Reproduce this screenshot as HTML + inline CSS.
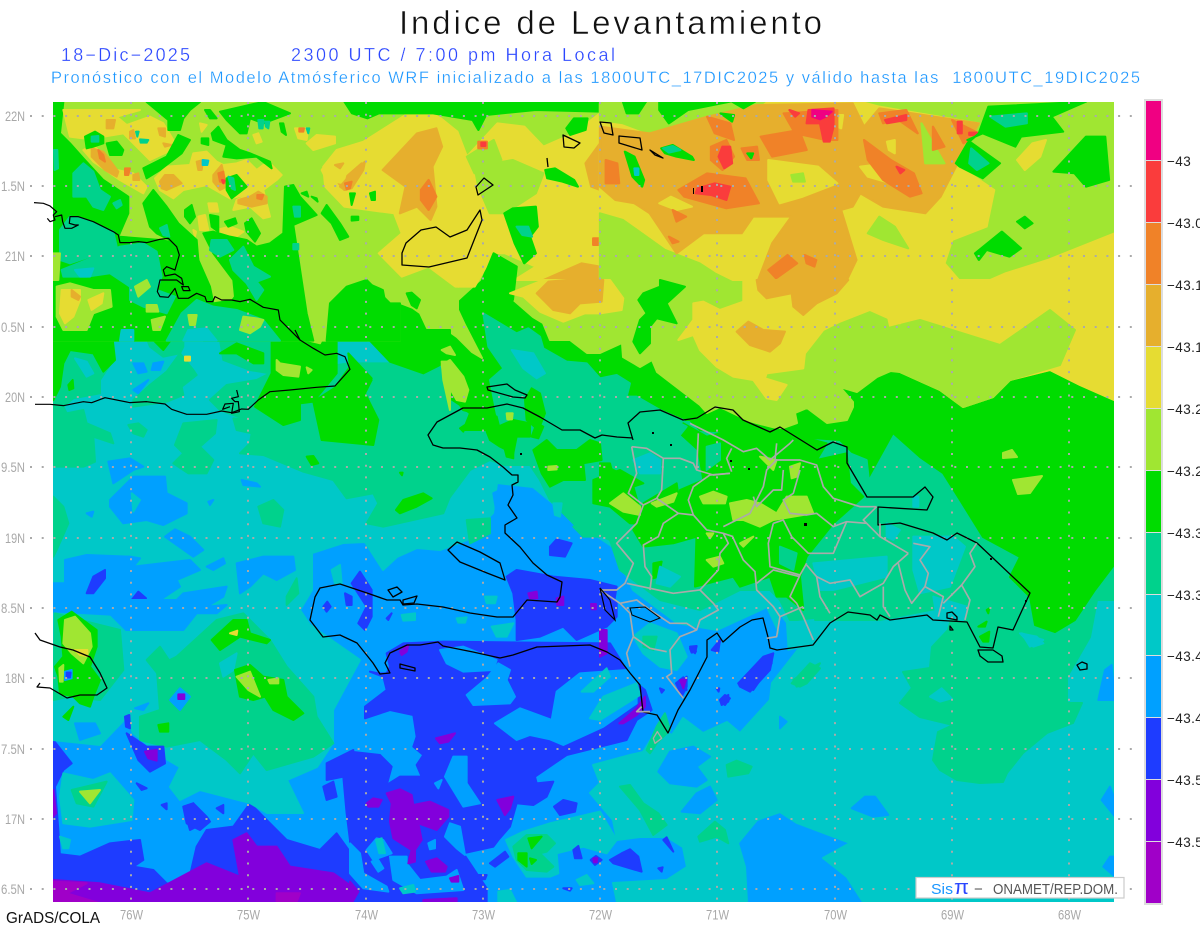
<!DOCTYPE html>
<html><head><meta charset="utf-8"><title>Indice de Levantamiento</title>
<style>
html,body{margin:0;padding:0;background:#fff;width:1200px;height:927px;overflow:hidden}
svg{display:block;position:absolute;left:0;top:0}
text{font-family:"Liberation Sans",sans-serif}
polygon{stroke-linejoin:round}
.m{fill:#f00082;stroke:#f00082}.r{fill:#fa3c3c;stroke:#fa3c3c}.o{fill:#f08228;stroke:#f08228}
.d{fill:#e6af2d;stroke:#e6af2d}.y{fill:#e6dc32;stroke:#e6dc32}.g{fill:#a0e632;stroke:#a0e632}
.n{fill:#00dc00;stroke:#00dc00}.s{fill:#00d28c;stroke:#00d28c}.c{fill:#00c8c8;stroke:#00c8c8}
.b{fill:#00a0ff;stroke:#00a0ff}.u{fill:#1e3cff;stroke:#1e3cff}.i{fill:#8200dc;stroke:#8200dc}
.p{fill:#a000c8;stroke:#a000c8}
.px polygon{stroke-width:2}.z3 polygon{stroke-width:6}.z1 polygon{stroke-width:6}
.coast1{fill:none;stroke:#000;stroke-width:1.3;stroke-linejoin:round}
.coast3{fill:none;stroke:#000;stroke-width:3.6;stroke-linejoin:round}
.prov{fill:none;stroke:#aaa;stroke-width:5;stroke-linejoin:round}
.ax{font-size:13.5px;fill:#a8a8a8}
.bar{font-size:13.5px;fill:#222;letter-spacing:.4px}
.thin{stroke:#fff;stroke-width:.3px}
</style></head><body>
<svg width="1200" height="927" viewBox="0 0 1200 927" xmlns="http://www.w3.org/2000/svg">
<defs><clipPath id="mp"><rect x="53" y="102" width="1061" height="800"/></clipPath></defs>
<rect width="1200" height="927" fill="#fff"/>
<text x="399" y="34" font-size="33" fill="#111" textLength="423" lengthAdjust="spacing" stroke="#fff" stroke-width=".5">Indice de Levantamiento</text>
<text class="thin" x="61" y="61" font-size="18" fill="#2a46ff" textLength="129" lengthAdjust="spacing">18−Dic−2025</text>
<text class="thin" x="291" y="61" font-size="18" fill="#2a46ff" textLength="324" lengthAdjust="spacing">2300 UTC / 7:00 pm Hora Local</text>
<text class="thin" x="51" y="83" font-size="16.5" fill="#1a96ff" textLength="1089" lengthAdjust="spacing" xml:space="preserve">Pronóstico con el Modelo Atmósferico WRF inicializado a las 1800UTC_17DIC2025 y válido hasta las  1800UTC_19DIC2025</text>

<g clip-path="url(#mp)">
<rect x="53" y="102" width="1061" height="800" fill="#00a0ff"/>

<!-- low layers, lower-left -->
<g class="z3" transform="translate(0,600) scale(.3333)">
<polygon class="u" points="160,760 240,770 330,730 420,720 430,780 400,800 460,810 500,850 560,870 590,740 620,690 700,680 750,610 800,660 860,720 960,750 1010,700 1060,770 1060,910 160,910"/>
<polygon class="u" points="160,420 215,490 190,510 165,560 175,690 180,770 155,770"/>
<polygon class="u" points="980,490 1060,450 1060,800 1040,640 1030,530 980,540"/>
<polygon class="u" points="620,650 630,665 600,690 560,670 550,620 580,610"/>
<polygon class="u" points="970,560 1000,545 1010,590 980,600"/>
<polygon class="i" points="160,840 300,850 450,880 620,790 720,830 700,720 740,700 770,740 830,740 870,800 1000,820 1070,870 1070,910 160,910"/>
<polygon class="i" points="160,570 168,640 160,650"/>
<polygon class="p" points="160,845 260,850 200,880 300,910 160,910"/>
<polygon class="p" points="830,880 900,880 890,905 830,905"/>
</g>
<!-- low layers, centre -->
<g class="z3" transform="translate(350,640) scale(.3333)">
<polygon class="u" points="45,200 110,150 100,110 60,95 85,100 110,100 120,80 110,40 160,10 280,5 780,10 830,90 860,130 885,150 905,210 860,240 830,300 650,345 555,410 560,430 610,425 590,470 550,495 500,490 480,560 445,600 430,620 340,640 410,745 410,790 0,790 0,335 90,345 125,380 110,435 150,410 215,410 200,375 220,345 190,320 200,290 190,225 120,210 45,235"/>
<polygon class="b" points="270,30 340,20 440,60 430,90 340,95 290,70"/>
<polygon class="b" points="350,165 410,115 445,70 480,90 470,120 495,170 480,190 370,195"/>
<polygon class="b" points="435,250 510,205 605,240 620,155 690,100 830,90 860,130 860,190 760,260 640,315 600,298 540,285 500,300"/>
<polygon class="b" points="285,410 310,350 350,350 350,430 390,490 340,500"/>
<polygon class="b" points="255,430 275,420 265,445"/>
<polygon class="b" points="285,590 300,550 330,560 345,645 320,625"/>
<polygon class="b" points="235,610 255,600 255,625 240,628"/>
<polygon class="b" points="0,610 30,640 40,700 110,740 115,755 40,745 0,700"/>
<polygon class="b" points="120,650 170,650 170,670 210,720 290,710 320,690 340,750 200,760 130,720"/>
<polygon class="b" points="65,665 85,660 100,685 85,695"/>
<polygon class="b" points="80,595 100,600 125,640 70,660 50,630"/>
<polygon class="c" points="78,600 95,595 105,640 88,640"/>
<polygon class="c" points="150,745 190,735 195,755 160,760"/>
<polygon class="i" points="110,460 150,448 185,465 190,495 240,485 295,510 295,530 260,570 205,550 215,600 195,630 195,665 175,670 185,630 130,595 120,545 125,490"/>
<polygon class="i" points="50,490 70,475 95,480 85,500 55,500"/>
<polygon class="i" points="258,295 315,280 295,305 270,310"/>
<polygon class="i" points="442,480 490,470 480,505 465,525"/>
<polygon class="i" points="228,665 260,655 290,680 285,695 245,695"/>
<polygon class="i" points="300,715 325,708 325,725 305,725"/>
<polygon class="i" points="150,35 175,15 170,35 155,45"/>
<polygon class="i" points="808,250 860,205 885,170 885,200 860,225 820,250"/>
<polygon class="i" points="220,780 320,775 320,790 220,790"/>
<polygon class="i" points="0,725 25,755 5,790 0,790"/>
</g>
<g class="z3" transform="translate(300,380) scale(.3333)">
<polygon class="u" points="620,590 650,570 760,590 870,600 950,620 940,680 920,740 830,780 790,740 720,770 650,780 650,720 640,640"/>
<polygon class="u" points="750,500 770,478 815,490 795,530 750,525"/>
<polygon class="i" points="685,640 710,635 712,655 690,655"/>
<polygon class="i" points="770,655 790,650 790,675 772,675"/>
<polygon class="i" points="873,672 888,672 888,688 875,688"/>
</g>
<g class="z3" transform="translate(600,390) scale(.3333)">
<polygon class="u" points="0,590 50,640 50,680 20,710 0,700"/>
<polygon class="i" points="0,720 20,720 20,790 0,800"/>
</g>

<!-- big contour layers -->
<g class="px">
<polygon class="c" points="53,102 1114,102 1114,902 863,902 847,877 823,858 850,843 797,823 780,812 777,813 757,820 738,843 745,867 747,902 617,902 613,883 667,880 687,867 683,847 667,837 640,837 617,840 613,820 590,793 600,783 593,765 630,755 643,752 658,728 672,735 683,718 703,733 727,722 740,733 770,700 772,683 800,647 787,650 767,607 717,630 677,623 633,590 613,547 573,520 533,487 497,483 493,513 467,540 440,550 417,548 397,557 383,570 365,542 343,543 312,553 312,590 300,610 310,625 360,660 333,710 333,743 317,767 287,780 303,813 267,813 250,803 200,790 180,800 170,787 180,767 163,757 133,733 127,717 100,745 53,740"/>
<polygon class="s" points="450,102 1114,102 1114,600 1097,600 1090,637 1067,677 1067,703 1082,703 1073,723 1047,733 1023,753 1007,773 1003,782 980,783 957,780 940,770 933,760 938,732 953,725 920,717 900,703 912,688 903,672 930,668 932,647 948,630 950,623 960,605 930,610 880,620 790,620 780,600 770,590 740,590 700,610 660,600 640,585 620,570 610,540 575,525 550,500 540,480 530,465 505,465 490,460 470,470 450,497"/>
<polygon class="n" points="53,102 1114,102 1114,565 1095,590 1075,620 1055,632 1035,625 1030,597 1010,577 1020,557 983,537 960,500 943,473 920,457 893,433 867,480 853,453 840,440 700,430 690,420 500,420 463,410 460,405 442,393 430,367 423,373 400,362 380,330 53,330"/>
<polygon class="g" points="400,102 1114,102 1114,400 1080,385 1050,370 1010,380 993,397 963,407 940,390 900,372 893,370 877,377 857,392 840,387 853,402 853,407 847,420 827,423 807,408 795,413 797,423 783,428 767,427 747,420 720,407 707,413 700,405 657,372 652,360 640,367 623,357 622,343 600,353 587,353 570,340 550,340 543,323 533,317 510,297 505,280 490,255 480,280 458,300 458,310 465,325 482,358 472,352 457,337 450,332 427,328 420,313 413,308 400,303"/>
<polygon class="y" points="880,280 1114,280 1114,400 1080,385 1050,370 1010,380 993,397 963,407 940,390 900,372"/>
<polygon class="g" points="880,330 920,320 1000,345 1050,310 1075,330 1060,365 1010,380 993,397 963,407 940,390 900,372 880,370"/>
<polygon class="g" points="1003,453 1012,450 1017,457 1003,458"/>
<polygon class="g" points="1013,480 1042,476 1030,493 1018,494"/>
</g>

<!-- west, 20N-17.6N -->
<g class="z3" transform="translate(50,330) scale(.3333)">
<polygon class="s" points="10,60 185,60 190,90 150,150 150,190 70,205 40,230 50,250 100,240 110,280 180,310 190,340 130,320 135,395 100,410 10,410"/>
<polygon class="s" points="10,500 40,530 55,580 20,660 10,680"/>
<polygon class="s" points="250,210 300,165 350,125 390,70 430,120 440,135 395,170 400,195 350,215 250,230"/>
<polygon class="s" points="280,0 400,0 400,50 390,70 340,80 300,50"/>
<polygon class="s" points="400,280 500,270 495,310 450,350 490,390 470,430 415,430 370,400 400,370 375,345"/>
<polygon class="s" points="235,285 265,280 290,300 280,320 250,310"/>
<polygon class="s" points="480,210 530,165 620,150 660,130 900,100 1200,100 1200,500 1180,550 1000,590 950,580 985,520 970,490 890,505 850,450 760,425 640,375 570,370 600,340 605,310 560,300 550,265 590,270 510,240"/>
<polygon class="s" points="625,530 670,510 700,540 690,590 640,580"/>
<polygon class="s" points="510,30 580,0 660,0 660,130 600,120 520,90"/>
<polygon class="n" points="10,0 185,0 195,90 160,125 130,70 60,60 40,100 30,170 10,210"/>
<polygon class="n" points="55,165 68,150 70,175 58,180"/>
<polygon class="n" points="300,0 385,0 340,60 310,30"/>
<polygon class="g" points="320,0 360,0 335,25"/>
<polygon class="y" points="405,80 420,80 420,92 405,92"/>
<polygon class="n" points="510,70 560,40 640,70 640,100 610,100 560,70"/>
<polygon class="n" points="665,0 860,0 860,130 790,215 750,220 750,270 700,285 615,230 665,130"/>
<polygon class="n" points="790,215 860,170 895,145 965,150 945,190 985,270 970,345 815,330"/>
<polygon class="n" points="895,70 965,145 895,145 860,165 900,110"/>
<polygon class="n" points="930,0 1200,0 1200,90 1120,130 1020,95"/>
<polygon class="n" points="1038,540 1060,510 1120,490 1145,505 1100,530 1050,550"/>
<polygon class="n" points="770,380 790,378 805,400 785,405"/>
<polygon class="n" points="1050,428 1058,428 1056,436"/>
<polygon class="g" points="680,90 690,100 750,110 745,140 700,135 680,120"/>
<polygon class="g" points="770,112 785,120 775,130"/>
<polygon class="g" points="750,0 830,0 810,40 770,30"/>
<polygon class="g" points="1175,95 1200,95 1200,240 1180,150"/>
<polygon class="c" points="75,85 110,95 130,130 110,140"/>
<polygon class="b" points="250,100 280,100 290,125 265,130"/>
<polygon class="b" points="310,100 340,95 330,120 305,120"/>
<polygon class="b" points="250,180 295,150 265,190"/>
<polygon class="b" points="175,395 240,385 280,410 250,420 190,460"/>
<polygon class="b" points="180,510 250,440 345,440 350,490 410,520 410,550 340,585 290,570 220,580 180,530"/>
<polygon class="c" points="245,490 270,510 250,545"/>
<polygon class="b" points="345,620 375,598 420,620 460,660 430,680"/>
<polygon class="b" points="110,550 130,545 125,560"/>
<polygon class="b" points="575,450 620,460 630,470 580,465"/>
<polygon class="b" points="475,515 490,510 480,525"/>
<polygon class="b" points="470,710 520,685 525,700 490,720"/>
<polygon class="b" points="560,700 640,680 730,680 735,720 680,750 640,730 600,770 570,790"/>
<polygon class="b" points="45,690 110,675 240,680 270,685 250,710 420,690 450,720 380,750 390,770 300,830 250,870 320,870 400,790 530,770 520,800 470,830 530,825 500,850 440,850 400,900 10,900 10,760 45,760"/>
<polygon class="u" points="110,790 130,740 165,720 165,745 130,790"/>
<polygon class="u" points="245,810 265,785 288,805 280,825 250,825"/>
<polygon class="c" points="845,720 870,705 875,760 855,760"/>
<polygon class="s" points="710,800 740,745 745,790 710,825"/>
<polygon class="u" points="905,760 930,725 965,780 965,860 945,900 925,880 950,830"/>
<polygon class="u" points="885,790 905,800 905,825 890,825"/>
<polygon class="u" points="820,830 832,815 842,830 830,845"/>
<polygon class="u" points="1010,865 1025,850 1015,870"/>
</g>

<!-- north-west -->
<g class="z3" transform="translate(50,100) scale(.3333)">
<polygon class="g" points="8,6 1050,6 1050,722 8,722"/>
<polygon class="n" points="8,6 40,6 30,100 60,130 100,175 160,240 235,290 235,340 205,410 330,420 440,440 445,480 480,560 490,610 555,600 560,722 8,722"/>
<polygon class="y" points="40,30 270,30 200,50 230,75 300,50 340,70 370,120 365,150 300,180 260,140 220,100 160,110 100,115 60,110"/>
<polygon class="y" points="100,150 130,135 200,210 250,220 290,260 280,280 210,240 130,185"/>
<polygon class="y" points="315,235 350,200 420,195 430,160 470,155 500,185 520,195 560,190 590,180 620,210 640,195 665,195 695,225 680,240 640,270 660,350 640,355 600,320 550,330 560,300 610,280 540,295 470,255 400,270 370,295 330,270"/>
<polygon class="y" points="445,350 465,345 475,390 450,390"/>
<polygon class="y" points="500,390 540,380 580,395 545,420 510,405"/>
<polygon class="y" points="475,310 500,310 505,335 480,335"/>
<polygon class="y" points="770,130 800,105 855,110 855,130 790,150"/>
<polygon class="y" points="735,85 775,85 770,120 745,115"/>
<polygon class="y" points="610,105 625,100 635,125 620,130"/>
<polygon class="y" points="450,70 470,75 455,95"/>
<polygon class="y" points="430,390 438,395 435,410"/>
<polygon class="d" points="170,60 195,60 190,85 170,85"/>
<polygon class="d" points="125,145 160,155 205,215 200,230 165,210 125,170"/>
<polygon class="o" points="145,150 160,165 165,185 150,175"/>
<polygon class="d" points="240,95 250,90 255,115 240,115"/>
<polygon class="d" points="325,85 345,85 345,110 330,105"/>
<polygon class="d" points="340,130 365,135 345,140"/>
<polygon class="o" points="225,205 240,205 235,225 225,225"/>
<polygon class="d" points="250,225 265,220 268,240 250,240"/>
<polygon class="d" points="330,245 345,225 370,225 395,250 350,270 335,265"/>
<polygon class="d" points="490,225 515,195 530,260 510,270 490,245"/>
<polygon class="o" points="505,220 520,215 525,250 510,245"/>
<polygon class="r" points="516,240 525,242 520,250"/>
<polygon class="d" points="565,300 600,290 625,275 650,290 650,310 605,320 565,310"/>
<polygon class="o" points="622,285 640,285 635,298 622,295"/>
<polygon class="d" points="440,185 460,180 455,210 445,210"/>
<polygon class="o" points="748,85 762,85 760,95 748,95"/>
<polygon class="n" points="280,310 310,270 350,320 385,370 440,420 445,480 400,440 320,400 300,380"/>
<polygon class="n" points="460,400 490,395 540,410 590,420 620,440 660,430 700,400 705,260 730,255 750,290 800,345 730,375 770,640 790,722 460,722 555,590 550,540 490,460"/>
<polygon class="n" points="290,6 450,6 420,30 400,55 390,90 355,90 355,60"/>
<polygon class="n" points="510,35 620,10 640,6 720,40 680,55 640,70 600,55 590,100 570,100 530,60"/>
<polygon class="n" points="465,30 480,30 500,55 480,55"/>
<polygon class="n" points="690,70 700,70 708,105 695,95"/>
<polygon class="n" points="455,115 475,115 475,135 455,130"/>
<polygon class="n" points="485,100 505,80 530,120 570,150 600,160 660,185 665,205 620,170 560,175 520,170 530,135 490,120"/>
<polygon class="n" points="280,205 350,170 385,105 420,120 395,160 330,210 290,235"/>
<polygon class="n" points="170,130 200,125 220,150 215,165 180,165"/>
<polygon class="n" points="105,110 135,95 160,110 160,130 130,140 110,145"/>
<polygon class="n" points="530,235 560,225 590,260 545,295 530,270"/>
<polygon class="n" points="405,330 425,315 435,350 420,370 405,350"/>
<polygon class="n" points="480,345 505,350 505,395 485,380"/>
<polygon class="n" points="525,365 555,355 560,370 535,380"/>
<polygon class="n" points="585,370 605,355 630,400 615,425 590,395"/>
<polygon class="n" points="815,340 830,315 870,370 895,410 870,420 845,370"/>
<polygon class="n" points="755,280 770,275 775,290"/>
<polygon class="n" points="785,290 800,295 803,305"/>
<polygon class="s" points="30,390 60,350 110,360 190,395 200,440 150,460 60,490 30,480"/>
<polygon class="s" points="210,440 280,430 320,455 335,530 320,570 375,590 350,640 280,620 240,600 240,560 180,520 110,530 40,530 35,510 110,480"/>
<polygon class="s" points="350,722 395,640 440,600 490,620 560,630 640,660 690,722"/>
<polygon class="s" points="70,220 100,190 130,215 150,270 180,290 160,330 130,320 110,290 70,290"/>
<polygon class="s" points="190,310 210,300 215,315 200,325"/>
<polygon class="s" points="330,385 350,375 358,410 340,405"/>
<polygon class="s" points="485,420 530,420 550,450 510,470 480,450"/>
<polygon class="s" points="540,480 580,440 610,500 660,530 620,545 640,570 620,600 590,550 550,510"/>
<polygon class="s" points="730,320 750,320 750,350 735,350"/>
<polygon class="s" points="730,432 745,432 745,448 730,448"/>
<polygon class="s" points="860,690 900,680 940,700 950,722 860,722"/>
<polygon class="s" points="125,110 145,108 145,125 125,125"/>
<polygon class="s" points="258,95 266,95 262,110"/>
<polygon class="s" points="270,118 295,120 290,128 272,128"/>
<polygon class="s" points="625,60 640,60 638,85 628,85"/>
<polygon class="s" points="645,65 658,65 655,85 648,80"/>
<polygon class="s" points="535,230 550,235 555,270 545,265"/>
<polygon class="s" points="770,85 778,85 775,100"/>
<polygon class="s" points="12,150 22,150 24,205 14,210"/>
<polygon class="c" points="458,180 475,182 472,195 458,195"/>
<polygon class="c" points="415,690 470,685 500,722 400,722"/>
<polygon class="c" points="75,510 130,505 120,530 90,530"/>
<polygon class="c" points="215,690 250,690 250,722 210,722"/>
<polygon class="g" points="20,560 60,550 130,570 180,570 185,620 130,640 110,690 40,690 20,650"/>
<polygon class="y" points="35,570 90,570 90,600 70,650 45,670 30,640"/>
<polygon class="y" points="115,600 160,580 155,610 125,630"/>
<polygon class="d" points="65,570 90,590 85,600 65,590"/>
<polygon class="g" points="255,560 290,540 300,560 265,590"/>
<polygon class="g" points="290,615 320,615 325,635 290,635"/>
<polygon class="g" points="305,660 345,650 330,690 310,690"/>
<polygon class="g" points="415,645 440,645 435,675 420,675"/>
<polygon class="g" points="580,650 620,655 640,660 630,680 600,700 570,690"/>
<polygon class="g" points="10,460 30,460 25,540 10,540"/>
</g>

<!-- top-centre details -->
<g class="z1" transform="scale(.3827,.3333)">
<polygon class="y" points="845,500 880,450 950,425 1060,345 1130,335 1195,395 1220,470 1300,370 1370,380 1420,440 1500,400 1568,340 1568,840 1345,840 1400,800 1320,760 1290,760 1240,860 1190,860 1120,800 1050,830 990,760 1050,700 1030,640 900,620 850,560"/>
<polygon class="g" points="1240,500 1340,480 1420,520 1400,580 1320,640 1280,640 1250,560"/>
<polygon class="g" points="1220,470 1290,420 1310,480 1240,520"/>
<polygon class="d" points="1000,510 1090,400 1140,385 1155,440 1130,500 1140,620 1125,660 1090,620 1045,640 1060,560"/>
<polygon class="d" points="885,550 945,490 920,560 900,570"/>
<polygon class="d" points="1530,490 1568,430 1568,570 1545,560"/>
<polygon class="d" points="1420,840 1520,790 1568,800 1568,840"/>
<polygon class="o" points="1100,570 1120,540 1140,590 1120,630 1100,600"/>
<polygon class="o" points="1250,425 1272,425 1272,445 1250,445"/>
<polygon class="o" points="1550,715 1568,715 1568,735 1550,735"/>
<polygon class="r" points="1258,428 1268,428 1268,438 1258,438"/>
<polygon class="n" points="900,305 1568,305 1568,335 1400,330 1270,345 1250,390 1235,360 1130,340 990,340 960,355 920,340"/>
<polygon class="n" points="1318,640 1340,625 1400,620 1405,680 1385,710 1400,760 1370,790 1345,730"/>
<polygon class="n" points="1425,510 1450,505 1500,540 1510,560 1470,545 1430,535"/>
<polygon class="n" points="1480,385 1500,355 1535,355 1530,390 1490,405"/>
<polygon class="n" points="900,900 910,860 950,845 1000,870 1005,900"/>
<polygon class="n" points="1290,760 1350,800 1340,900 1240,900"/>
<polygon class="s" points="1350,680 1380,680 1390,710 1365,705"/>
</g>
<g class="z3" transform="translate(50,100) scale(.3333)">
<polygon class="n" points="830,722 840,610 890,560 950,540 1020,610 1050,610 1050,722"/>
<polygon class="n" points="900,280 915,280 905,315"/>
<polygon class="n" points="960,280 975,275 975,300 965,300"/>
<polygon class="n" points="905,350 925,350 925,360 905,362"/>
<polygon class="y" points="815,210 845,170 900,170 880,250 830,240"/>
<polygon class="d" points="855,195 880,190 870,205"/>
<polygon class="d" points="870,260 900,225 945,185 940,210 905,265 885,270"/>
<polygon class="o" points="885,250 905,245 900,265 890,268"/>
</g>

<!-- top-right details -->
<g class="z1" transform="translate(600,0) scale(.3827,.3333)">
<polygon class="y" points="0,310 680,305 730,320 990,370 940,440 940,500 1030,570 1010,680 920,720 900,790 960,870 1060,820 1170,780 1345,700 1345,840 0,840"/>
<polygon class="g" points="0,640 60,660 170,750 260,790 300,820 370,860 330,900 0,900"/>
<polygon class="g" points="700,700 730,650 770,680 805,745 740,720"/>
<polygon class="g" points="0,305 430,305 400,330 300,350 200,380 130,400 60,370 0,360"/>
<polygon class="d" points="0,380 130,400 280,350 410,315 660,310 690,380 730,325 990,370 960,430 930,500 890,590 850,640 740,620 680,580 660,620 630,630 670,780 620,900 420,900 410,850 450,730 500,650 400,650 370,700 270,700 200,760 130,640 90,610 40,600 0,560"/>
<polygon class="g" points="840,370 900,490 850,490"/>
<polygon class="y" points="155,610 185,590 240,620 200,630"/>
<polygon class="y" points="440,480 570,500 620,550 530,590 470,610 440,540"/>
<polygon class="y" points="680,500 750,490 790,560 700,530"/>
<polygon class="y" points="500,410 530,440 480,460"/>
<polygon class="y" points="620,345 635,345 630,385 620,380"/>
<polygon class="y" points="750,425 770,420 770,460 755,450"/>
<polygon class="g" points="500,525 530,520 535,545 505,545"/>
<polygon class="o" points="690,420 760,480 820,520 840,580 810,590 740,540 700,480"/>
<polygon class="o" points="205,570 280,520 380,535 415,610 330,625 220,590"/>
<polygon class="o" points="290,440 330,420 350,470 320,510 290,480"/>
<polygon class="o" points="280,350 340,370 350,420 300,400"/>
<polygon class="o" points="420,410 520,390 540,450 450,470"/>
<polygon class="o" points="480,340 620,330 620,420 590,420 510,400"/>
<polygon class="o" points="730,340 800,330 830,400 780,360 740,370"/>
<polygon class="o" points="870,380 900,440 870,450"/>
<polygon class="o" points="920,360 990,400 950,430"/>
<polygon class="o" points="440,810 490,765 515,790 460,835"/>
<polygon class="o" points="535,765 565,780 560,800 540,790"/>
<polygon class="o" points="190,630 225,650 200,665"/>
<polygon class="o" points="180,710 205,725 190,730"/>
<polygon class="o" points="15,480 45,490 50,550 15,550"/>
<polygon class="o" points="370,445 410,440 415,480 385,480"/>
<polygon class="r" points="320,440 340,440 345,490 325,505 310,470"/>
<polygon class="r" points="255,565 300,550 340,560 330,600 290,585 250,580"/>
<polygon class="r" points="545,330 610,325 610,380 600,425 585,425 575,370 540,370"/>
<polygon class="r" points="745,360 800,345 800,360 750,370"/>
<polygon class="r" points="775,500 795,510 785,520"/>
<polygon class="r" points="965,398 985,398 985,405 965,405"/>
<polygon class="r" points="495,330 520,340 510,350"/>
<polygon class="r" points="935,365 945,365 945,400 935,400"/>
<polygon class="m" points="555,330 605,335 590,350 575,358 555,350"/>
<polygon class="n" points="60,305 120,305 100,340 70,340"/>
<polygon class="n" points="155,305 340,305 230,330 180,370 155,330"/>
<polygon class="n" points="315,340 350,345 345,365"/>
<polygon class="n" points="345,305 405,305 375,325"/>
<polygon class="n" points="160,445 190,435 240,470 245,480 200,470 170,460"/>
<polygon class="n" points="65,455 90,470 115,540 110,560 85,530"/>
<polygon class="n" points="1015,320 1270,305 1180,350 1210,395 1100,410 1085,440 1000,400 960,420 1045,490 1000,535 940,500 930,490 960,430 990,400"/>
<polygon class="n" points="1185,515 1270,410 1320,410 1330,540 1270,560 1240,520"/>
<polygon class="n" points="1090,665 1110,650 1130,670 1110,685"/>
<polygon class="n" points="980,760 1050,695 1100,745 1070,770 1010,750 990,780"/>
<polygon class="n" points="385,460 400,460 395,475"/>
<polygon class="s" points="970,445 1015,490 985,510 965,490"/>
<polygon class="s" points="1020,350 1115,340 1115,370 1060,380"/>
<polygon class="s" points="165,445 190,438 210,450 180,458"/>
<polygon class="c" points="90,505 100,505 100,525 92,525"/>
<polygon class="y" points="1090,480 1130,430 1165,420 1150,470 1110,510"/>
<polygon class="y" points="1305,770 1320,770 1315,810 1305,805"/>
</g>

<!-- y 280-430 centre -->
<g class="z3" transform="translate(400,280) scale(.3333)">
<polygon class="y" points="150,0 190,0 175,20"/>
<polygon class="n" points="20,40 35,38 60,60 50,85 35,75"/>
<polygon class="y" points="330,40 430,0 630,0 670,55 665,90 600,100 555,100 490,125 420,95 370,50"/>
<polygon class="d" points="410,40 445,5 500,0 610,0 605,65 540,70 510,100 460,90"/>
<polygon class="y" points="880,70 910,65 960,90 1030,65 1030,0 1500,0 1500,130 1410,90 1320,125 1270,150 1215,220 1210,265 1100,280 1095,295 1160,315 1130,360 1100,355 1060,300 1000,290 950,260 900,210 880,165 835,180 880,120"/>
<polygon class="d" points="1070,0 1345,0 1310,40 1250,70 1210,105 1180,80 1175,40 1100,55 1075,30"/>
<polygon class="d" points="1010,155 1045,125 1090,150 1155,155 1140,190 1110,215 1050,195"/>
<polygon class="y" points="0,0 0,0"/>
<polygon class="g" points="890,270 905,265 905,285 895,285"/>
<polygon class="n" points="780,0 855,20 800,70 830,130 770,115 750,140 750,190 720,220 700,185 720,120 740,100 715,60 730,40 780,20"/>
<polygon class="s" points="250,100 300,130 350,160 385,145 420,170 430,205 500,245 560,250 600,295 650,285 690,310 680,350 710,350 780,390 850,420 870,450 305,450 290,400 270,300 310,265 265,200"/>
<polygon class="c" points="335,210 400,220 435,280 410,295 370,265"/>
<polygon class="g" points="125,255 150,240 190,290 205,330 195,365 170,360 135,300"/>
<polygon class="g" points="125,210 150,200 165,225 140,220"/>
<polygon class="n" points="375,360 395,325 420,340 435,400 415,450 380,420"/>
<polygon class="n" points="180,375 210,400 190,450 300,450 290,410 250,400"/>
<polygon class="g" points="322,400 338,400 335,418 325,418"/>
</g>

<!-- lower-left details -->
<g class="z3" transform="translate(0,600) scale(.3333)">
<polygon class="b" points="370,0 600,0 470,60 400,90"/>
<polygon class="c" points="160,40 330,50 380,100 370,200 330,300 230,330 160,330"/>
<polygon class="s" points="165,40 280,70 360,90 370,210 300,300 210,290 160,300"/>
<polygon class="n" points="175,60 215,35 290,90 290,140 270,200 300,240 280,290 270,320 240,310 220,290 180,280 175,230 165,200 190,170 185,110"/>
<polygon class="g" points="195,60 225,50 270,100 275,140 250,190 215,160 190,130"/>
<polygon class="y" points="225,150 262,150 262,168 240,165"/>
<polygon class="g" points="178,205 190,195 188,245 180,245"/>
<polygon class="b" points="195,215 215,210 215,235 195,240"/>
<polygon class="u" points="200,218 212,218 210,232 200,232"/>
<polygon class="n" points="190,350 220,320 205,360"/>
<polygon class="c" points="190,520 280,540 330,520 400,600 395,660 270,680 190,670 180,590"/>
<polygon class="s" points="215,570 320,545 280,620 230,610"/>
<polygon class="g" points="240,575 300,570 270,610"/>
<polygon class="c" points="180,710 210,720 205,745 190,745"/>
<polygon class="b" points="225,370 285,370 300,400 240,420"/>
<polygon class="s" points="530,170 650,60 730,40 810,120 860,200 940,290 950,350 1000,430 940,470 800,510 760,460 720,520 680,480 600,420 500,440 420,420 420,350 480,330 470,200"/>
<polygon class="s" points="440,180 480,140 520,200 480,230"/>
<polygon class="c" points="660,190 710,160 700,210 670,230"/>
<polygon class="n" points="635,120 700,60 740,60 750,100 810,120 800,130 720,110 660,150"/>
<polygon class="n" points="705,210 750,195 790,230 850,240 860,290 910,340 880,360 820,330 795,290 760,300 720,290"/>
<polygon class="g" points="710,230 750,215 780,290 745,270"/>
<polygon class="y" points="690,100 712,92 710,105"/>
<polygon class="g" points="805,240 835,235 835,250 810,250"/>
<polygon class="n" points="475,375 505,370 505,395 480,395"/>
<polygon class="b" points="510,300 540,265 570,290 540,330"/>
<polygon class="i" points="535,283 553,283 553,297 535,297"/>
<polygon class="b" points="405,325 445,310 430,330"/>
<polygon class="u" points="380,400 440,440 490,440 495,490 450,515 415,480"/>
<polygon class="i" points="435,455 470,450 470,482 445,475"/>
<polygon class="u" points="375,350 388,345 390,385 378,380"/>
<polygon class="u" points="410,550 440,565 425,570"/>
<polygon class="u" points="485,615 500,610 500,628"/>
<polygon class="u" points="650,625 670,615 670,640"/>
<polygon class="u" points="550,620 580,610 590,680 570,690"/>
</g>

<!-- south centre details -->
<g class="z3" transform="translate(350,640) scale(.3333)">
<polygon class="b" points="925,395 960,335 1030,320 1080,350 1040,380 1070,420 1040,440 960,430"/>
<polygon class="b" points="995,515 1040,460 1080,440 1100,480 1050,520"/>
<polygon class="c" points="695,155 770,85 780,110 730,155"/>
<polygon class="c" points="720,235 760,170 860,130 870,165 790,215 750,240"/>
<polygon class="s" points="890,330 920,260 945,220 960,270 920,310 900,340"/>
<polygon class="s" points="1130,375 1160,362 1205,380 1195,400 1135,410"/>
<polygon class="s" points="810,440 840,435 880,490 925,520 950,555 910,585 870,510"/>
<polygon class="s" points="1045,590 1095,545 1125,570 1135,610 1100,590 1050,605"/>
<polygon class="c" points="468,600 520,575 600,550 750,515 800,600 770,640 700,620 620,640 625,700 600,710 530,710 490,650"/>
<polygon class="s" points="490,620 530,585 590,585 615,610 590,635 570,640 610,680 590,695 530,690 500,660"/>
<polygon class="n" points="505,640 530,640 530,680 505,660"/>
<polygon class="n" points="535,595 575,590 545,625"/>
<polygon class="n" points="540,655 558,660 545,672"/>
<polygon class="c" points="445,755 480,750 500,790 445,790"/>
<polygon class="c" points="680,720 710,705 730,730 690,735"/>
<polygon class="u" points="420,670 465,635 475,650 435,680"/>
<polygon class="u" points="612,500 640,480 680,490 675,515 630,525"/>
<polygon class="u" points="670,630 685,618 695,655 675,655"/>
<polygon class="u" points="722,660 738,648 755,660 735,675"/>
<polygon class="i" points="730,655 742,655 740,667 732,667"/>
<polygon class="u" points="780,660 815,640 840,628 865,650 875,695 840,685 790,670"/>
<polygon class="u" points="940,600 950,592 970,635"/>
<polygon class="u" points="925,685 938,682 935,695"/>
<polygon class="u" points="385,705 410,705 405,718 390,718"/>
<polygon class="u" points="1165,130 1235,65 1265,45 1265,70 1210,150"/>
<polygon class="u" points="1110,180 1125,165 1140,175 1125,195"/>
<polygon class="u" points="1100,145 1108,145 1106,155"/>
<polygon class="u" points="1090,30 1110,5 1100,35"/>
<polygon class="u" points="1020,25 1035,20 1038,35 1025,38"/>
<polygon class="u" points="978,130 1000,112 1010,150 990,155"/>
<polygon class="i" points="990,140 1005,120 1000,145"/>
<polygon class="u" points="930,145 942,150 935,158"/>
<polygon class="u" points="640,745 665,745 660,752"/>
</g>

<!-- haiti area details -->
<g class="z3" transform="translate(300,380) scale(.3333)">
<polygon class="c" points="555,650 590,650 585,670 560,670"/>
<polygon class="c" points="575,740 640,730 620,770 590,770"/>
<polygon class="c" points="470,715 500,712 495,728 475,728"/>
<polygon class="c" points="305,705 345,700 345,720 310,722"/>
<polygon class="b" points="580,340 600,330 610,400 590,400"/>
<polygon class="n" points="560,155 640,120 690,130 690,170 650,170 640,220 600,200 570,180"/>
<polygon class="n" points="700,210 740,180 770,210 830,210 870,180 900,190 905,240 850,250 855,300 790,300 750,320 725,280"/>
<polygon class="n" points="900,250 960,280 960,300 920,300"/>
<polygon class="n" points="480,145 495,135 490,155"/>
<polygon class="n" points="710,130 730,140 715,175 695,170"/>
<polygon class="n" points="610,190 640,200 640,235 620,230"/>
<polygon class="g" points="620,100 638,100 636,118 622,118"/>
<polygon class="g" points="745,260 770,258 770,268 745,270"/>
<polygon class="s" points="500,420 570,415 570,460 510,490"/>
<polygon class="c" points="760,370 785,370 780,410 765,405"/>
<polygon class="s" points="820,440 880,420 900,470 850,470"/>
</g>

<!-- DR details -->
<g class="z3" transform="translate(600,390) scale(.3333)">
<polygon class="c" points="100,210 150,190 180,210 180,250 120,250"/>
<polygon class="n" points="250,100 320,140 400,120 450,100 680,160 650,210 740,190 750,280 790,320 700,400 620,500 600,560 610,660 560,620 530,620 510,560 420,590 400,560 285,590 290,420 230,350 240,300 310,270 295,180 240,130"/>
<polygon class="n" points="-20,270 60,240 130,280 100,290 120,360 140,400 90,400 30,350 -20,340"/>
<polygon class="n" points="130,340 230,280 240,350 290,380 290,440 220,460 130,470 100,420"/>
<polygon class="n" points="0,220 30,220 40,260 0,260"/>
<polygon class="n" points="160,520 185,515 175,560 160,565"/>
<polygon class="s" points="320,170 360,160 360,210 320,240"/>
<polygon class="s" points="540,470 590,490 580,540 540,520"/>
<polygon class="s" points="240,100 260,110 240,135"/>
<polygon class="s" points="750,190 800,210 810,300 770,290"/>
<polygon class="c" points="640,520 860,500 860,560 700,600 660,600"/>
<polygon class="c" points="940,440 1060,440 1095,470 1050,590 960,610 940,540"/>
<polygon class="c" points="860,400 900,420 880,450 860,440"/>
<polygon class="c" points="180,530 240,560 210,590 170,580"/>
<polygon class="c" points="1000,620 1100,650 1090,690 1010,680"/>
<polygon class="c" points="940,320 955,320 955,350 940,350"/>
<polygon class="c" points="1265,730 1330,750 1290,770"/>
<polygon class="g" points="300,320 340,305 380,320 375,340 310,340"/>
<polygon class="g" points="390,340 440,330 480,340 530,370 560,320 620,320 640,370 520,390 480,410 430,390 400,390"/>
<polygon class="g" points="155,340 230,310 220,335 170,350"/>
<polygon class="g" points="30,340 70,310 120,350 120,375 70,365"/>
<polygon class="g" points="320,430 340,430 330,445"/>
<polygon class="g" points="420,460 460,440 430,470"/>
<polygon class="g" points="320,510 360,500 370,520 340,530"/>
<polygon class="g" points="480,200 530,210 520,240"/>
<polygon class="g" points="570,230 600,220 590,260 575,265"/>
<polygon class="c" points="100,740 150,700 230,730 260,800 230,840 180,830 130,790"/>
<polygon class="s" points="130,740 170,740 160,780 130,770"/>
<polygon class="c" points="560,700 640,690 640,740 580,720"/>
<polygon class="s" points="580,870 640,830 660,820 620,880 590,890"/>
<polygon class="u" points="415,880 490,800 520,790 510,840 450,905 420,890"/>
<polygon class="u" points="360,930 385,915 385,935 365,945"/>
<polygon class="u" points="335,780 360,750 355,785"/>
<polygon class="u" points="235,880 260,860 260,890 245,920"/>
<polygon class="i" points="240,870 258,868 250,895"/>
<polygon class="u" points="270,770 290,768 285,790"/>
</g>

<!-- south-east details -->
<g class="z3" transform="translate(780,600) scale(.3333)">
<polygon class="c" points="450,290 485,265 515,295 480,305"/>
<polygon class="c" points="720,100 770,110 790,130 760,140"/>
<polygon class="s" points="35,250 90,190 120,205 80,250 60,260"/>
<polygon class="n" points="600,110 628,95 625,125 610,125"/>
<polygon class="n" points="595,80 620,65 615,80"/>
<polygon class="n" points="620,30 628,25 625,40"/>
<polygon class="b" points="955,300 975,210 995,195 1005,300"/>
<polygon class="b" points="965,600 990,560 1005,600 1005,650"/>
<polygon class="b" points="970,800 990,770 1005,770 1005,830"/>
<polygon class="b" points="215,625 255,590 285,590 325,645 280,650"/>
<polygon class="b" points="0,50 15,70 20,150 0,200"/>
<polygon class="b" points="0,350 20,365 0,385"/>
</g>
</g>

<!-- grid -->
<g stroke="#aaa" stroke-width="2" stroke-dasharray="2 9.7" fill="none">
<path d="M30 116H1133M30 186H1133M30 256H1133M30 327H1133M30 397H1133M30 467H1133M30 538H1133M30 608H1133M30 678H1133M30 749H1133M30 819H1133M30 889H1133"/>
<path d="M131 102V904M248 102V904M366 102V904M483 102V904M600 102V904M717 102V904M835 102V904M952 102V904M1069 102V904"/>
</g>

<!-- coast -->
<path class="coast1" d="M633 438L617 437 602 435 595 438 580 430 562 430 540 417 523 408 507 404 487 408 463 408 437 422 428 435 433 445 443 448 460 448 477 450 490 457 503 467 512 475 518 475 518 482 512 485 513 495 508 505 517 518 505 525 505 533 520 547 533 563 547 575 562 582 560 597 557 602 527 600 513 617 497 617 470 613 443 607 417 604 403 605 400 600 387 600 367 593 340 584 320 588 315 597 310 620 323 637 340 635 357 643 373 663 380 674 390 673 385 663 390 653 407 645 420 645 438 642 443 646 473 652 500 658 513 655 537 647 590 645 607 652 620 660 630 673 640 685 642 703 643 712 657 715 668 733 678 710 690 690 707 657 707 640 717 633 723 642 740 627 752 620 763 618 768 637 770 648 777 650 813 645 830 623 848 612 870 615 877 620 880 615 890 620 927 615 933 620 967 622 980 647 993 648 998 627 1013 630 1030 593 977 543 957 533 947 540 933 533 900 523 878 525 878 507 927 510 933 497 925 487 913 497 867 497 847 463 847 447 833 442 817 450 780 427 770 432 743 420 733 410 715 407 697 418 683 420 660 410 640 412 628 423 633 440"/>
<path class="coast1" d="M487 387L507 384 515 390 527 395 525 398 513 397 488 390Z M448 550L457 542 480 552 500 563 505 580 487 573 460 562Z M400 664L415 668 415 671 400 668Z M388 590L397 587 402 592 393 597Z M403 600L417 596 414 603 403 604Z M978 650L993 650 1002 656 1003 662 988 662 980 656Z M947 613L952 612 957 617 957 620 947 618Z M950 626L953 630 950 630Z M1077 665L1082 662 1087 664 1087 669 1080 670Z M402 253L406 243 421 230 436 227 450 237 467 230 480 210 482 220 467 258 429 267 402 265Z M484 178L493 185 478 195 476 187Z M563 135L580 143 574 148 564 147Z M600 122L611 123 613 135 604 133Z M619 136L640 138 642 150 619 143Z M650 150L663 158 655 155Z M547 158L548 167"/>
<path class="coast1" d="M35 633L40 640 60 647 73 650 90 657 100 673 107 688 97 695 80 695 67 698 50 688 37 687 40 683"/>
<g transform="translate(50,330) scale(.3333)">
<path class="coast3" d="M-45 223 0 223 40 227 100 215 125 218 165 203 240 218 290 215 345 222 365 238 410 253 470 253 515 243 545 248 575 237 595 238 625 210 660 185 720 180 800 172 855 168 900 118 885 80 860 70 825 75 790 55 750 30 735 0"/>
<path class="coast3" d="M560 180 565 200 545 205 555 215 565 215 568 245 545 250 550 220 525 222 518 238 540 230"/>
</g>
<g transform="translate(50,100) scale(.3333)">
<path class="coast3" d="M750 720 690 660 685 630 640 622 600 598 570 605 545 600 515 600 495 590 488 605 470 605 465 590 440 580 415 595 385 595 375 565 355 592 330 590 322 575 330 540 380 540 400 555 395 535 375 522 345 528 340 510 350 500 375 510 388 465 380 440 355 415 330 418 290 428 265 425 240 428 210 428 205 405 190 395 130 365 85 350 60 350 58 370 75 375 85 375 65 385 45 385 38 365 35 345 15 350"/>
<path class="coast3" d="M395 560 415 560 420 572 400 572Z"/>
<path class="coast3" d="M-48 308 -20 310 0 318 20 335 10 345 15 360 0 365 -8 355"/>
</g>
<g fill="#000"><rect x="693" y="188" width="1" height="6"/><rect x="701" y="186" width="2" height="6"/><rect x="652" y="432" width="2" height="2"/><rect x="670" y="444" width="2" height="2"/><rect x="520" y="453" width="2" height="2"/><rect x="990" y="558" width="2" height="2"/><rect x="1025" y="600" width="2" height="2"/><rect x="804" y="523" width="3" height="3"/><rect x="730" y="460" width="2" height="2"/><rect x="748" y="468" width="2" height="2"/></g>

<!-- provinces -->
<g class="prov" transform="translate(600,390) scale(.3333)">
<path d="M95 170 110 250 85 310 130 345 110 400 50 460 100 520 75 580 50 600 0 600"/>
<path d="M95 170 140 175 190 205 240 205 280 220 290 240 340 255 390 250"/>
<path d="M295 130 290 240"/>
<path d="M270 100 370 150 430 185 470 175 510 210 570 160 580 150"/>
<path d="M190 205 185 300 170 325 130 345"/>
<path d="M170 325 235 370 280 375 320 420 370 430 400 440"/>
<path d="M390 250 330 255 280 290 265 330 280 375"/>
<path d="M395 175 380 205 395 245"/>
<path d="M235 370 190 400 175 440 130 465 135 530 155 560 150 600"/>
<path d="M80 580 150 595 220 610 300 600 340 640 355 660 300 690 290 720 240 740 210 780 215 850 200 860 250 925"/>
<path d="M60 640 110 630 150 660 210 700 260 700 290 720"/>
<path d="M100 740 150 775 200 785"/>
<path d="M100 740 80 790 90 830"/>
<path d="M370 430 385 460 360 490 355 540 300 600"/>
<path d="M400 445 430 510 465 545 470 600 520 650 540 680 530 740 500 745"/>
<path d="M370 410 450 370 490 290 500 240 530 210"/>
<path d="M460 320 470 350 520 300 545 300 550 240"/>
<path d="M530 160 525 210 560 210 600 210 650 225 670 290 700 325 780 350 830 350"/>
<path d="M600 240 580 310 550 330 570 370 620 375 650 370 700 410 740 395 800 400 840 440 925 490"/>
<path d="M520 400 550 390 575 440 625 490 700 490 740 395"/>
<path d="M520 400 505 460 510 530 600 555 620 520"/>
<path d="M620 525 650 560 660 620 690 670"/>
<path d="M650 560 690 580 750 570 780 620 850 580 880 530 925 490"/>
<path d="M895 520 915 600 935 640 975 590 1030 620 1015 680"/>
<path d="M850 590 850 650 870 680"/>
<path d="M940 460 990 470 960 510 985 550 975 590"/>
<path d="M1130 460 1110 490 1125 530 1085 585 1030 640"/>
<path d="M1085 585 1110 630 1095 690"/>
<path d="M600 555 570 620 590 640 610 680 640 750"/>
<path d="M540 680 610 650"/>
<path d="M470 580 520 540 600 560"/>
<path d="M830 350 790 390 800 400"/>
<path d="M840 400 840 440"/>
<path d="M0 600 60 640 90 670 100 740 M125 950 110 965 150 965"/>
<path d="M160 1045 172 1025 185 1045 165 1060Z" stroke-width="4"/>
</g>
<path d="M630 608L645 607 660 618 650 622 632 615Z" fill="none" stroke="#000" stroke-width="1"/>
<path d="M600 588L610 600 615 620 605 610Z" fill="none" stroke="#000" stroke-width="1.2"/>

<!-- axis labels -->
<g class="ax">
<text x="5" y="121" textLength="20" lengthAdjust="spacingAndGlyphs">22N</text><text x="1" y="191" textLength="24" lengthAdjust="spacingAndGlyphs">1.5N</text><text x="5" y="261" textLength="20" lengthAdjust="spacingAndGlyphs">21N</text><text x="1" y="332" textLength="24" lengthAdjust="spacingAndGlyphs">0.5N</text><text x="5" y="402" textLength="20" lengthAdjust="spacingAndGlyphs">20N</text><text x="1" y="472" textLength="24" lengthAdjust="spacingAndGlyphs">9.5N</text><text x="5" y="543" textLength="20" lengthAdjust="spacingAndGlyphs">19N</text><text x="1" y="613" textLength="24" lengthAdjust="spacingAndGlyphs">8.5N</text><text x="5" y="683" textLength="20" lengthAdjust="spacingAndGlyphs">18N</text><text x="1" y="754" textLength="24" lengthAdjust="spacingAndGlyphs">7.5N</text><text x="5" y="824" textLength="20" lengthAdjust="spacingAndGlyphs">17N</text><text x="1" y="894" textLength="24" lengthAdjust="spacingAndGlyphs">6.5N</text>
</g>
<g class="ax" font-size="14">
<text x="120" y="919.5" textLength="23" lengthAdjust="spacingAndGlyphs">76W</text><text x="237" y="919.5" textLength="23" lengthAdjust="spacingAndGlyphs">75W</text><text x="355" y="919.5" textLength="23" lengthAdjust="spacingAndGlyphs">74W</text><text x="472" y="919.5" textLength="23" lengthAdjust="spacingAndGlyphs">73W</text><text x="589" y="919.5" textLength="23" lengthAdjust="spacingAndGlyphs">72W</text><text x="706" y="919.5" textLength="23" lengthAdjust="spacingAndGlyphs">71W</text><text x="824" y="919.5" textLength="23" lengthAdjust="spacingAndGlyphs">70W</text><text x="941" y="919.5" textLength="23" lengthAdjust="spacingAndGlyphs">69W</text><text x="1058" y="919.5" textLength="23" lengthAdjust="spacingAndGlyphs">68W</text>
</g>
<text x="6" y="923" font-size="16" fill="#111" textLength="94" lengthAdjust="spacingAndGlyphs">GrADS/COLA</text>

<!-- logo box -->
<rect x="916" y="877.5" width="208" height="20.5" fill="#fff" stroke="#ccc" stroke-width="1.2"/>
<text x="931" y="894" font-size="15" fill="#1a96ff" textLength="22" lengthAdjust="spacingAndGlyphs">Sis</text>
<text x="954" y="894" font-size="20" fill="#2a46ff" textLength="15" lengthAdjust="spacingAndGlyphs">π</text>
<text x="974" y="894" font-size="15" fill="#555">−</text>
<text x="993" y="894" font-size="15" fill="#555" textLength="125" lengthAdjust="spacingAndGlyphs">ONAMET/REP.DOM.</text>

<!-- colourbar -->
<rect x="1144" y="99" width="19" height="806" fill="#ddd"/>
<rect x="1146" y="101" width="15" height="59" fill="#f00082"/>
<rect x="1146" y="161" width="15" height="61" fill="#fa3c3c"/>
<rect x="1146" y="223" width="15" height="61" fill="#f08228"/>
<rect x="1146" y="285" width="15" height="61" fill="#e6af2d"/>
<rect x="1146" y="347" width="15" height="61" fill="#e6dc32"/>
<rect x="1146" y="409" width="15" height="61" fill="#a0e632"/>
<rect x="1146" y="471" width="15" height="61" fill="#00dc00"/>
<rect x="1146" y="533" width="15" height="61" fill="#00d28c"/>
<rect x="1146" y="595" width="15" height="60" fill="#00c8c8"/>
<rect x="1146" y="656" width="15" height="61" fill="#00a0ff"/>
<rect x="1146" y="718" width="15" height="61" fill="#1e3cff"/>
<rect x="1146" y="780" width="15" height="61" fill="#8200dc"/>
<rect x="1146" y="842" width="15" height="61" fill="#a000c8"/>
<g class="bar">
<text x="1167" y="166">−43</text><text x="1167" y="228">−43.0</text><text x="1167" y="290">−43.1</text><text x="1167" y="352">−43.1</text><text x="1167" y="414">−43.2</text><text x="1167" y="476">−43.2</text><text x="1167" y="538">−43.3</text><text x="1167" y="600">−43.3</text><text x="1167" y="661">−43.4</text><text x="1167" y="723">−43.4</text><text x="1167" y="785">−43.5</text><text x="1167" y="847">−43.5</text>
</g>
</svg>
</body></html>
